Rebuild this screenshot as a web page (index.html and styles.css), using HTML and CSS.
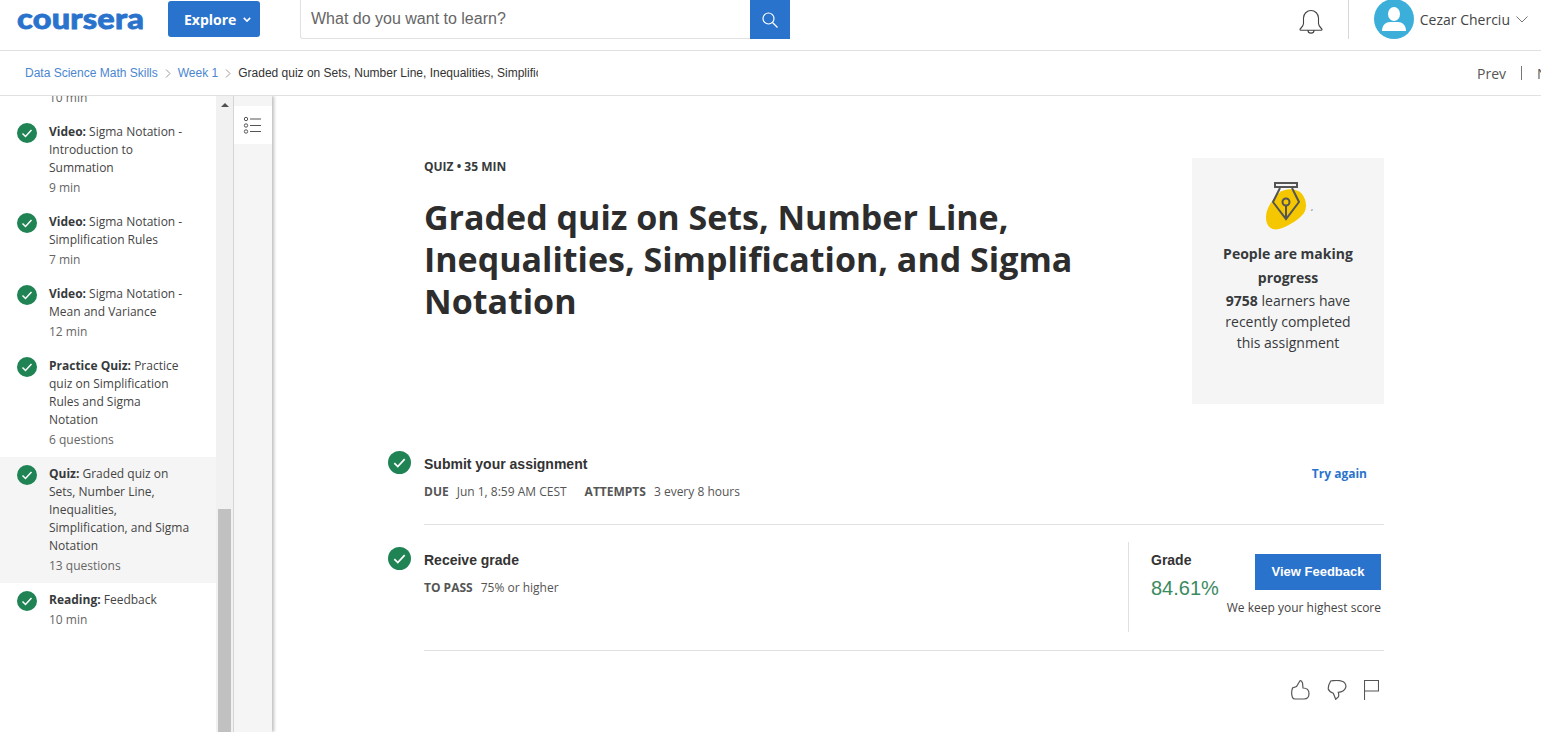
FILE: index.html
```html
<!DOCTYPE html>
<html lang="en">

<head>
    <meta charset="UTF-8">
    <title>Graded quiz on Sets, Number Line, Inequalities, Simplification, and Sigma Notation | Coursera</title>
    <link rel="stylesheet" href="styles.css">
</head>

<body>
    <header class="topbar">
        <a href="#" class="logo">coursera</a>
        <a href="#" class="explore">Explore
            <svg width="8" height="5" viewBox="0 0 10 6"><path d="M1 1l4 4 4-4" fill="none" stroke="#fff" stroke-width="2"/></svg>
        </a>
        <div class="search">
            <span class="search-text">What do you want to learn?</span>
            <span class="search-btn">
                <svg width="18" height="18" viewBox="0 0 18 18"><circle cx="7.500" cy="7.500" r="5.500" fill="none" stroke="#fff" stroke-width="1.200"/><path d="M11.500 11.500l5 5" stroke="#fff" stroke-width="1.200"/></svg>
            </span>
        </div>
        <div class="spacer"></div>
        <svg class="bell" width="24" height="26" viewBox="0 0 24 26"><path d="M1 20.500c0-1 3.500-3 3.500-6V9c0-4 3.300-7.500 7.500-7.500s7.500 3.500 7.500 7.500v5.500c0 3 3.500 5 3.500 6 0 .5-.4.8-1 .8H2c-.6 0-1-.3-1-.8z M9 21.500c0 3.500 6 3.500 6 0" fill="none" stroke="#444" stroke-width="1.100"/></svg>
        <div class="top-divider"></div>
        <svg class="avatar" width="40" height="40" viewBox="0 0 40 40"><circle cx="20" cy="20" r="20" fill="#3bafda"/><ellipse cx="20" cy="15" rx="6" ry="7" fill="#fff"/><path d="M8 32c0-6 4-9 8-9h8c4 0 8 3 8 9z" fill="#fff"/></svg>
        <span class="username">Cezar Cherciu</span>
        <svg class="caret" width="12" height="7" viewBox="0 0 12 7"><path d="M.5.5L6 6 11.500.5" fill="none" stroke="#777" stroke-width="1"/></svg>
    </header>

    <nav class="crumbs">
        <a href="#">Data Science Math Skills</a>
        <svg class="crumb-sep" width="6" height="9" viewBox="0 0 6 9"><path d="M1 .5l4 4-4 4" fill="none" stroke="#999"/></svg>
        <a href="#">Week 1</a>
        <svg class="crumb-sep" width="6" height="9" viewBox="0 0 6 9"><path d="M1 .5l4 4-4 4" fill="none" stroke="#999"/></svg>
        <span class="crumb-current">Graded quiz on Sets, Number Line, Inequalities, Simplification, and Sigma Notation</span>
        <div class="spacer"></div>
        <div class="pager">
            <span>Prev</span>
            <i class="pager-line"></i>
            <span>Next</span>
        </div>
    </nav>

    <div class="layout">
        <aside class="sidebar">
            <ul class="side-list">
                <li class="side-item side-item-cut">
                    <div class="side-body">
                        <div class="side-meta">10 min</div>
                    </div>
                </li>
                <li class="side-item">
                    <svg class="check" width="20" height="20" viewBox="0 0 20 20"><circle cx="10" cy="10" r="10" fill="#1f8354"/><path d="M5.500 10.500l3 3 6-6.500" fill="none" stroke="#fff" stroke-width="1.500"/></svg>
                    <div class="side-body">
                        <div><b>Video:</b> Sigma Notation - Introduction to Summation</div>
                        <div class="side-meta">9 min</div>
                    </div>
                </li>
                <li class="side-item">
                    <svg class="check" width="20" height="20" viewBox="0 0 20 20"><circle cx="10" cy="10" r="10" fill="#1f8354"/><path d="M5.500 10.500l3 3 6-6.500" fill="none" stroke="#fff" stroke-width="1.500"/></svg>
                    <div class="side-body">
                        <div><b>Video:</b> Sigma Notation - Simplification Rules</div>
                        <div class="side-meta">7 min</div>
                    </div>
                </li>
                <li class="side-item">
                    <svg class="check" width="20" height="20" viewBox="0 0 20 20"><circle cx="10" cy="10" r="10" fill="#1f8354"/><path d="M5.500 10.500l3 3 6-6.500" fill="none" stroke="#fff" stroke-width="1.500"/></svg>
                    <div class="side-body">
                        <div><b>Video:</b> Sigma Notation - Mean and Variance</div>
                        <div class="side-meta">12 min</div>
                    </div>
                </li>
                <li class="side-item">
                    <svg class="check" width="20" height="20" viewBox="0 0 20 20"><circle cx="10" cy="10" r="10" fill="#1f8354"/><path d="M5.500 10.500l3 3 6-6.500" fill="none" stroke="#fff" stroke-width="1.500"/></svg>
                    <div class="side-body">
                        <div><b>Practice Quiz:</b> Practice quiz on Simplification Rules and Sigma Notation</div>
                        <div class="side-meta">6 questions</div>
                    </div>
                </li>
                <li class="side-item side-item-active">
                    <svg class="check" width="20" height="20" viewBox="0 0 20 20"><circle cx="10" cy="10" r="10" fill="#1f8354"/><path d="M5.500 10.500l3 3 6-6.500" fill="none" stroke="#fff" stroke-width="1.500"/></svg>
                    <div class="side-body">
                        <div><b>Quiz:</b> Graded quiz on Sets, Number Line, Inequalities, Simplification, and Sigma Notation</div>
                        <div class="side-meta">13 questions</div>
                    </div>
                </li>
                <li class="side-item">
                    <svg class="check" width="20" height="20" viewBox="0 0 20 20"><circle cx="10" cy="10" r="10" fill="#1f8354"/><path d="M5.500 10.500l3 3 6-6.500" fill="none" stroke="#fff" stroke-width="1.500"/></svg>
                    <div class="side-body">
                        <div><b>Reading:</b> Feedback</div>
                        <div class="side-meta">10 min</div>
                    </div>
                </li>
            </ul>
        </aside>

        <div class="scrollbar">
            <i class="scroll-arrow"></i>
            <div class="spacer"></div>
            <div class="scroll-thumb"></div>
        </div>

        <div class="side-strip">
            <div class="strip-btn">
                <svg width="20" height="18" viewBox="0 0 20 18"><g fill="none" stroke="#555"><circle cx="3" cy="3" r="1.700"/><circle cx="3" cy="9.500" r="1.700"/><circle cx="3" cy="15.500" r="1.700"/><path d="M7 3h11M7 9.500h11M7 15.500h11"/></g></svg>
            </div>
        </div>

        <main class="main">
            <section class="intro">
                <div class="intro-text">
                    <div class="kicker">QUIZ • 35 MIN</div>
                    <h1 class="title">Graded quiz on Sets, Number Line, Inequalities, Simplification, and Sigma Notation</h1>
                </div>
                <div class="progress-card">
                    <div class="pen-wrap">
                        <svg class="pen" width="42" height="50" viewBox="0 0 42 50">
                            <path d="M-1 35C-1 25 8 15 12 11C18 6 30 6 35 12C39 17 40 24 38 29C35 36 22 44 12 47C4 49-1 44-1 35z" fill="#f5c700"/>
                            <g fill="none" stroke="#555" stroke-width="2">
                                <rect x="8" y="1" width="22" height="4"/>
                                <path d="M13 6L6 20l13 17 13-17-7-14"/>
                                <path d="M19 24v13"/>
                                <circle cx="19" cy="20" r="3.500"/>
                            </g>
                        </svg>
                        <span class="speck">,</span>
                    </div>
                    <div class="card-title">People are making progress</div>
                    <p class="card-text"><b>9758</b> learners have recently completed this assignment</p>
                </div>
            </section>

            <section class="steps">
                <div class="step">
                    <svg class="step-check" width="23" height="23" viewBox="0 0 20 20"><circle cx="10" cy="10" r="10" fill="#1f8354"/><path d="M5.500 10.500l3 3 6-6.500" fill="none" stroke="#fff" stroke-width="1.500"/></svg>
                    <div class="step-body step-body-submit">
                        <div>
                            <div class="step-title">Submit your assignment</div>
                            <div class="step-meta"><b>DUE</b><span>Jun 1, 8:59 AM CEST</span><b class="meta-next">ATTEMPTS</b><span>3 every 8 hours</span></div>
                        </div>
                        <a href="#" class="try-again">Try again</a>
                    </div>
                </div>
                <div class="step step-grade">
                    <svg class="step-check" width="23" height="23" viewBox="0 0 20 20"><circle cx="10" cy="10" r="10" fill="#1f8354"/><path d="M5.500 10.500l3 3 6-6.500" fill="none" stroke="#fff" stroke-width="1.500"/></svg>
                    <div class="step-body step-body-grade">
                        <div class="grade-left">
                            <div class="step-title">Receive grade</div>
                            <div class="step-meta"><b>TO PASS</b><span>75% or higher</span></div>
                        </div>
                        <div class="grade-panel">
                            <div class="grade-score">
                                <div class="step-title">Grade</div>
                                <div class="grade-value">84.61%</div>
                            </div>
                            <div class="grade-action">
                                <a href="#" class="feedback-btn">View Feedback</a>
                                <div class="grade-note">We keep your highest score</div>
                            </div>
                        </div>
                    </div>
                </div>
            </section>

            <div class="actions">
                <svg width="20" height="20" viewBox="0 0 20 20"><path d="M10 .8L6.500 6.500 2.500 8C1.500 11 1.500 15 2.500 17.500 3 18.800 4 19 5 19H14C17 19 19 17 19 13.500 19 10 17 8 13 8L12.500 3C12 1.500 11 .5 10 .8z" fill="none" stroke="#555" stroke-width="1.200"/></svg>
                <svg width="20" height="20" viewBox="0 0 20 20"><path d="M3.700 1C7 .3 13 .3 16.300 1.700 18.500 3 19.500 6 18.500 8 17.500 10.500 14 12 11.300 12.300 11.800 14 12 15.500 11.300 17L8.700 19.300C7.800 17 7 15 6.300 13.300 4 12.500 2 11 1.300 9 1 6 2.500 3 3.700 1z" fill="none" stroke="#555" stroke-width="1.200"/></svg>
                <svg width="15" height="20" viewBox="0 0 15 20"><path d="M.5 20V.5h14v10.500H.5" fill="none" stroke="#555" stroke-width="1.100"/></svg>
            </div>
        </main>
    </div>
</body>

</html>
```

FILE: styles.css
```css
body,
html {
    margin: 0;
    height: 100%;
    overflow: hidden;
    background-color: #fff;
    font-family: "Open Sans", sans-serif;
    color: #373a3c;
}

a {
    text-decoration: none;
}

.spacer {
    flex: 1;
}

/* top bar */
.topbar {
    display: flex;
    align-items: flex-start;
    height: 50px;
    border-bottom: 1px solid #e1e1e1;
}

.logo {
    width: 127px;
    margin: 0 24px 0 17px;
    font-family: "Lato", sans-serif;
    font-weight: 900;
    font-size: 29px;
    line-height: 35px;
    letter-spacing: 0.2px;
    color: #2a73cc;
    -webkit-text-stroke: 0.8px #2a73cc;
    transform: scaleX(1.12);
    transform-origin: left center;
}

.explore {
    display: flex;
    align-items: center;
    gap: 7px;
    box-sizing: border-box;
    width: 92px;
    height: 36px;
    margin-top: 1px;
    padding-left: 16px;
    border-radius: 3px;
    background-color: #2a73cc;
    color: #fff;
    font-weight: 700;
    font-size: 14px;
}

.search {
    display: flex;
    width: 489px;
    height: 38px;
    margin-left: 40px;
    border: 1px solid #e1e1e1;
    border-top: 0;
    border-right: 0;
    border-radius: 0 0 0 3px;
}

.search-text {
    flex: 1;
    padding-left: 10px;
    font-family: "Liberation Sans", Arial, sans-serif;
    font-size: 16px;
    line-height: 37px;
    color: #666;
}

.search-btn {
    display: flex;
    align-items: center;
    justify-content: center;
    width: 40px;
    height: 39px;
    background-color: #2a73cc;
}

.bell {
    margin-top: 9px;
}

.top-divider {
    width: 1px;
    height: 39px;
    margin: 0 25px 0 25px;
    background-color: #d8d8d8;
}

.avatar {
    margin-top: -1px;
}

.username {
    margin-left: 6px;
    font-size: 14px;
    line-height: 39px;
    color: #444;
}

.caret {
    margin: 16px 13px 0 6px;
}

/* breadcrumb */
.crumbs {
    display: flex;
    align-items: center;
    height: 44px;
    padding-left: 25px;
    border-bottom: 1px solid #e1e1e1;
    font-family: "Liberation Sans", Arial, sans-serif;
    font-size: 12px;
}

.crumbs a {
    color: #4a86d0;
}

.crumb-sep {
    margin: 0 7px;
}

.crumb-current {
    width: 300px;
    overflow: hidden;
    white-space: nowrap;
    color: #333;
}

.pager {
    display: flex;
    align-items: center;
    width: 64px;
    overflow: hidden;
    font-family: "Open Sans", sans-serif;
    font-size: 14px;
    color: #555;
    white-space: nowrap;
}

.pager-line {
    flex: none;
    width: 1px;
    height: 14px;
    margin: 0 15px;
    background-color: #777;
}

/* body layout */
.layout {
    display: flex;
    height: 636px;
    overflow: hidden;
}

.sidebar {
    flex: none;
    width: 216px;
    overflow: hidden;
}

.side-list {
    list-style-type: none;
    margin: -9px 0 0 0;
    padding: 0;
    font-size: 12px;
    line-height: 18px;
    color: #444;
}

.side-item {
    display: flex;
    padding: 8px 24px 8px 17px;
}

.side-item-cut {
    padding-top: 0;
    padding-left: 49px;
}

.side-item-active {
    background-color: #f5f5f5;
}

.check {
    flex: none;
    margin: 0 12px 0 0;
}

.side-body b {
    font-weight: 700;
    color: #373a3c;
}

.side-meta {
    margin-top: 2px;
    color: #666;
}

.scrollbar {
    flex: none;
    display: flex;
    flex-direction: column;
    align-items: center;
    width: 17px;
    background-color: #f1f1f1;
    border-right: 1px solid #d8d8d8;
}

.scroll-arrow {
    width: 0;
    height: 0;
    margin-top: 7px;
    border-left: 4px solid transparent;
    border-right: 4px solid transparent;
    border-bottom: 4px solid #505050;
}

.scroll-thumb {
    width: 13px;
    height: 223px;
    background-color: #c1c1c1;
}

.side-strip {
    flex: none;
    width: 38px;
    padding-top: 10px;
    background-color: #f5f5f5;
    box-shadow: 2px 0 3px rgba(0, 0, 0, 0.25);
}

.strip-btn {
    display: flex;
    justify-content: center;
    align-items: center;
    height: 38px;
    padding-right: 1px;
    background-color: #fff;
}

/* main area */
.main {
    width: 960px;
    padding: 62px 0 0 152px;
}

.intro {
    display: flex;
    margin-bottom: 47px;
}

.intro-text {
    flex: 1;
}

.kicker {
    font-size: 12px;
    font-weight: 700;
    line-height: 18px;
}

.title {
    width: 680px;
    margin: 20px 0 0 0;
    font-size: 34px;
    font-weight: 700;
    line-height: 42px;
    color: #2d2d2d;
}

.progress-card {
    flex: none;
    box-sizing: border-box;
    width: 192px;
    height: 246px;
    padding: 24px 25px 0;
    background-color: #f5f5f5;
    text-align: center;
    font-size: 14px;
}

.pen-wrap {
    display: flex;
    justify-content: center;
    position: relative;
    height: 50px;
}

.pen {
    overflow: visible;
}

.speck {
    position: absolute;
    left: 94px;
    top: 20px;
    font-size: 8px;
    line-height: 10px;
}

.card-title {
    margin: 10px -9px 0;
    font-weight: 700;
    line-height: 24px;
}

.card-text {
    margin: 0;
    line-height: 21px;
}

.steps {
    margin-left: -36px;
}

.step {
    display: flex;
    align-items: flex-start;
    gap: 13px;
}

.step-check {
    flex: none;
}

.step-body {
    flex: 1;
    border-bottom: 1px solid #e1e1e1;
}

.step-body-submit {
    display: flex;
    justify-content: space-between;
    padding: 4px 17px 23px 0;
}

.step-title {
    font-family: "Liberation Sans", Arial, sans-serif;
    font-size: 14px;
    font-weight: 700;
    line-height: 18px;
    color: #333;
}

.step-meta {
    margin-top: 10px;
    font-size: 12px;
    line-height: 18px;
    color: #555;
}

.step-meta b {
    margin-right: 8px;
}

.step-meta .meta-next {
    margin-left: 18px;
}

.try-again {
    margin-top: 10px;
    font-size: 12px;
    font-weight: 700;
    line-height: 18px;
    color: #2a73cc;
}

.step-grade .step-check {
    margin-top: 22px;
}

.step-body-grade {
    display: flex;
    justify-content: space-between;
    margin-top: 17px;
    padding-bottom: 18px;
}

.grade-left {
    padding-top: 9px;
}

.grade-panel {
    display: flex;
    box-sizing: border-box;
    width: 256px;
    height: 90px;
    padding: 9px 3px 0 22px;
    border-left: 1px solid #e1e1e1;
}

.grade-score {
    flex: 1;
}

.grade-value {
    margin-top: 7px;
    font-family: "Liberation Sans", Arial, sans-serif;
    font-size: 20px;
    line-height: 24px;
    color: #3a8a60;
}

.grade-action {
    display: flex;
    flex-direction: column;
    align-items: flex-end;
    width: 160px;
    margin-top: 3px;
}

.feedback-btn {
    display: block;
    width: 126px;
    height: 36px;
    background-color: #2a73cc;
    color: #fff;
    font-family: "Liberation Sans", Arial, sans-serif;
    font-size: 13px;
    font-weight: 700;
    line-height: 35px;
    text-align: center;
}

.grade-note {
    margin-top: 9px;
    font-size: 12px;
    line-height: 18px;
    white-space: nowrap;
    color: #444;
}

.actions {
    display: flex;
    justify-content: flex-end;
    gap: 17px;
    padding: 29px 5px 0 0;
}
```
